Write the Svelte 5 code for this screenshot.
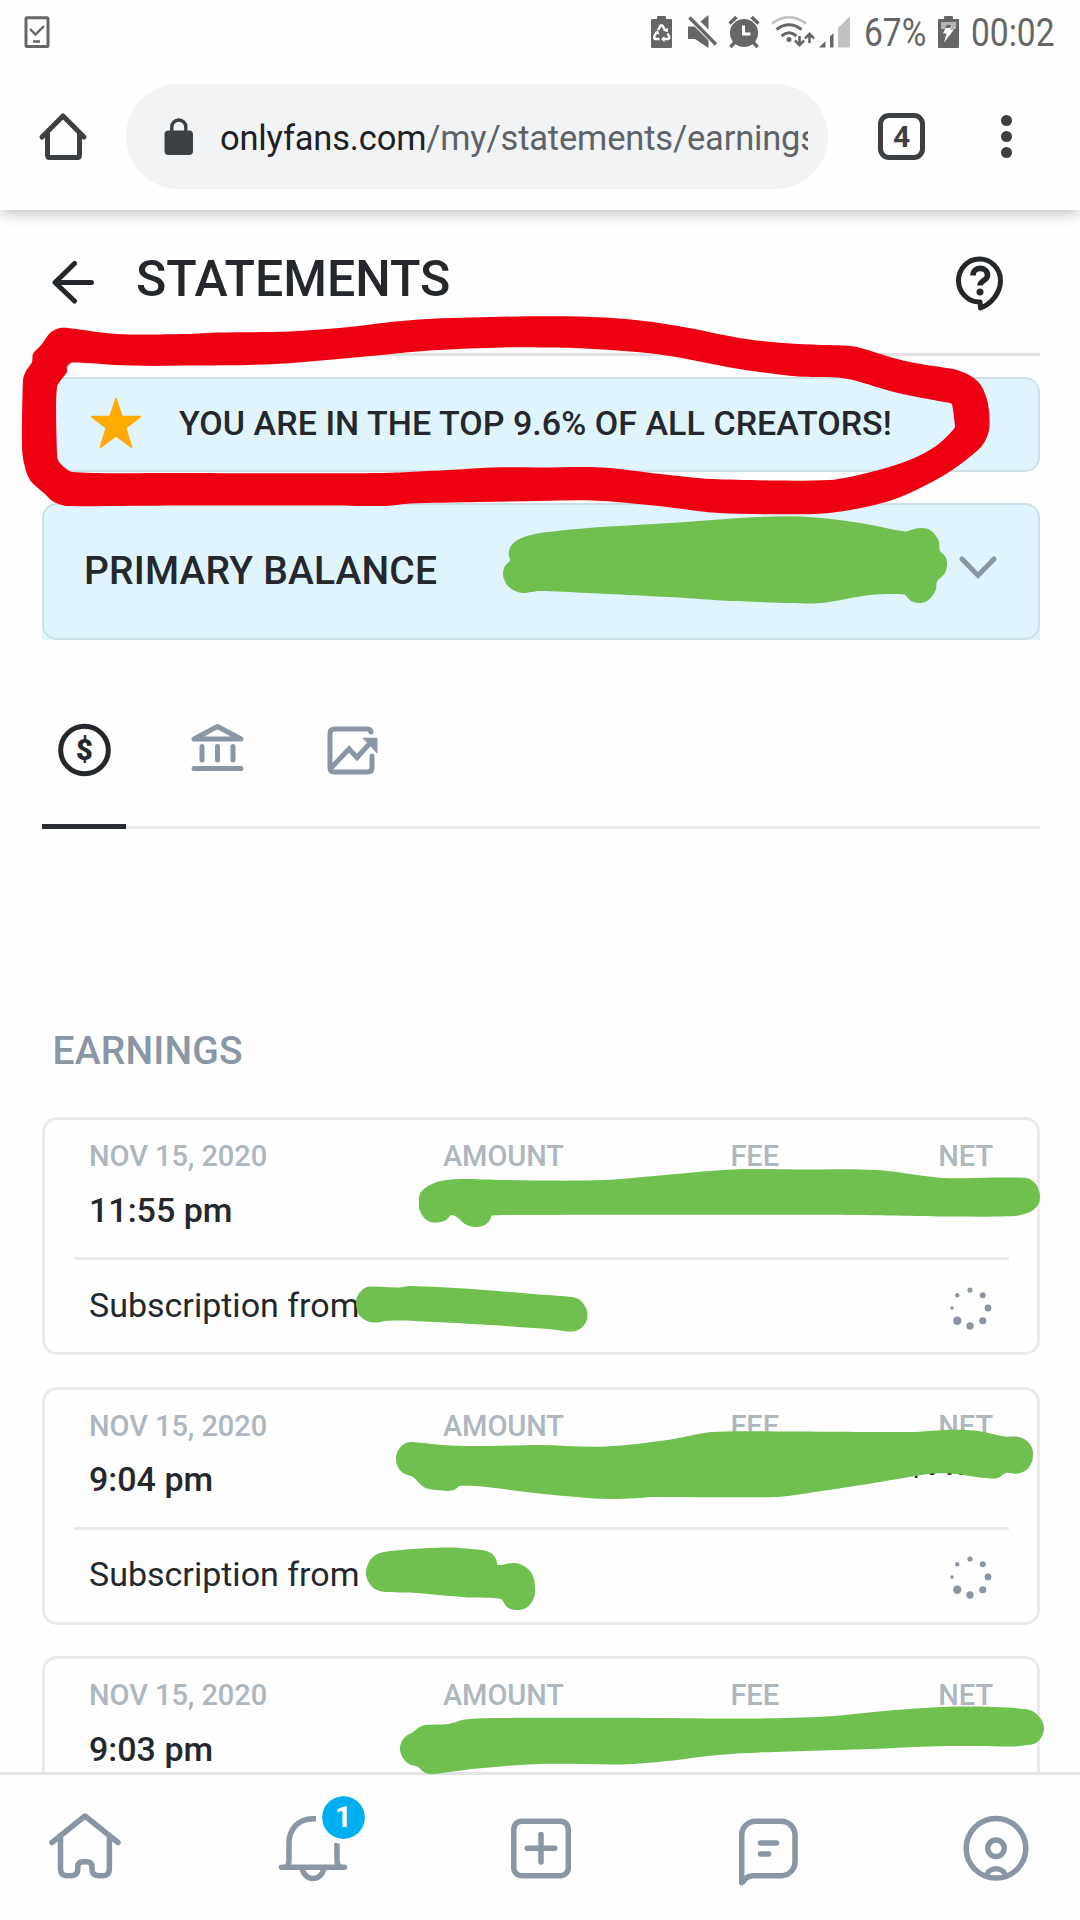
<script>
	const rows = [
		{ date: 'NOV 15, 2020', time: '11:55 pm', net: '' },
		{ date: 'NOV 15, 2020', time: '9:04 pm', net: '$7.99' },
		{ date: 'NOV 15, 2020', time: '9:03 pm', net: '$7.99' }
	];

	// spinner dots, clockwise from the top
	const dots = [2.6, 3, 3.4, 3.6, 3.7, 4.2, 1.8, 2.2].map((r, i) => ({
		r,
		x: 24 + 18 * Math.sin((i * Math.PI) / 4),
		y: 24 - 18 * Math.cos((i * Math.PI) / 4)
	}));

	// closed curve through a list of points
	function smooth(text) {
		const p = text.trim().split(/\s+/).map((s) => s.split(',').map(Number));
		const n = p.length;
		const k = 5.5;
		let d = `M${p[0]}`;
		for (let i = 0; i < n; i++) {
			const a = p[(i + n - 1) % n];
			const b = p[i];
			const c = p[(i + 1) % n];
			const e = p[(i + 2) % n];
			const seg = Math.hypot(c[0] - b[0], c[1] - b[1]);
			const s1 = Math.min(1, seg / Math.hypot(b[0] - a[0], b[1] - a[1]));
			const s2 = Math.min(1, seg / Math.hypot(e[0] - c[0], e[1] - c[1]));
			d += `C${b[0] + ((c[0] - a[0]) * s1) / k},${b[1] + ((c[1] - a[1]) * s1) / k} `;
			d += `${c[0] - ((e[0] - b[0]) * s2) / k},${c[1] - ((e[1] - b[1]) * s2) / k} ${c}`;
		}
		return d + 'Z';
	}

	const ringOuter = `60,328 50,333 42,344 33,354 32,362 26,371 23,380 22,447 24,463 30,480 45,494 54,502 67,506
		179,505.5 327,505.5 386,506 410,503.5 479,502 540,501 592,500.5 654,505.5 719,513 815,514 850,510 895,499
		946,474 981,447 989,430 988,404 982,387 975,379 965,373 953,369 905,361 857,347 843,345.5 798,344 746,339
		678,326 626,319 574,316.5 489,317 413,320 344,327.5 289,331.5 220,332.5 186,334 117,334 72,328.5`;
	const ringInner = `72,362.5 131,365.6 189,365.6 275,364 344,358.6 430,350.5 503,347.5 540,347.5 585,348.5
		660,354.6 733,368 798,376.6 836,377.6 853,380 898,393 950,403 952,404 955,426 954,429 936,446 912,459 877,470.4
		829,480 712,479 660,474 602,467.5 540,467.5 492,467.5 448,470 382,473 172,473 72,472 59,462 57,454 57,387
		67,372 67,367`;

	const scribbles = [
		`509,556 509,551 511,546 516,541 524,537 540,533 588,528 678,522.5 757,517 802,516.5 857,522.5 905,531.5
		914,529 922,528 930,530 936,536 939,542 940,551 945,556 947,563 945,573 937,581.6 936,589 933,595 927,601
		919,603 911,601 904,594.6 870,595 822,603 791,603 722,600.6 678,597.6 588,593 540,591 523,593 515,591
		508,586 504,579 503,573 505,566 510,560.5`,
		`419,1203 419,1198 421,1192 428,1186 441,1181 461,1179 503,1180 540,1180.6 605,1180 654,1176 733,1169.5
		795,1169.5 877,1170 943,1178 994,1177.5 1027,1178 1034,1182 1038,1188 1040,1196 1038,1205 1030,1212
		1015,1216 957,1216.6 850,1215 540,1215 492,1215.6 490,1220 485,1225 475,1227 465,1224 458,1218 451.5,1215
		446,1220 437,1222.6 428,1221 422,1215 419,1208`,
		`356,1303 357,1297 361,1291 367,1287 374,1286.6 399,1287.6 410,1286 472,1289 540,1294.5 572,1297 580,1300
		586,1308 587.5,1315 586,1322 580,1329 571,1331.6 557,1330 540,1328.6 482,1324.6 403,1320.6 386,1321
		375,1322.6 367,1321 360,1316 357,1310`,
		`396,1460 397,1453 401,1446.5 406,1443 412,1442 451,1445.5 489,1446 540,1445 605,1446.5 667,1440
		712,1432 784,1431.5 912,1432 946,1430 974,1430.5 1005,1436.5 1019,1437 1027,1441 1032,1448 1033,1455
		1031,1464 1025,1471 1016,1473.7 1006,1473 998,1478 984,1478 953,1473.7 929,1474 874,1483 815,1492
		777,1497 654,1497 619,1499 588,1498 540,1493.6 482,1486.6 460,1486 454,1490 447,1491 427,1488.6
		420,1484 413,1477 403,1473 398,1467`,
		`366,1572.7 368,1564 374,1556 384,1552 413,1549 448,1547.4 482,1550 491,1553 496,1559 498,1565 513,1563
		522,1565 530,1571 534,1579 535,1592.6 533,1600 526,1608 516,1610 507,1607 501,1599 468,1597.6 410,1592.6
		386,1592 375,1589 368,1581`,
		`400,1750 401,1743 405,1737 413,1732 418,1728 425,1725 448,1724 465,1719.5 499,1718 647,1718 757,1718.5
		826,1716.5 884,1711 943,1707 994,1707 1025,1709 1034,1712 1041,1719 1044,1727 1042,1736 1036,1743
		1027,1745 1015,1746.4 946,1746 884,1748.4 760,1752.4 712,1755.4 671,1760.7 622,1764.4 540,1764
		475,1768.7 434,1774 425,1772.700 418,1767 409,1764 403,1758`
	];
</script>

<div class="screen">
	<div class="status">
		<svg width="26" height="32" viewBox="0 0 26 32" fill="none" stroke="#666" stroke-width="3">
			<rect x="2" y="1.8" width="22" height="28.6" rx="1" />
			<path d="M6 13l5.5 5.500L20 10M9 25.500h7" stroke-width="2.4" />
		</svg>
		<div class="status-right">
			<svg width="204" height="36" viewBox="0 0 204 36" fill="#666">
				<path d="M1 6q0-1 1-1h5V3q0-1 1-1h7q1 0 1 1v2h5q1 0 1 1v27q0 1-1 1H2q-1 0-1-1z" />
				<path d="M8 16l2.500-4.200q1-1.300 2 0L15 16M17.500 19.500l1.700 3q.5 2-1.200 2.500h-4.500M9.500 25H5.500q-2-.5-1.200-2.500L6.500 18" fill="none" stroke="#fff" stroke-width="2.400" />
				<path d="M14.500 22v6l-3.500-3zM12.800 16.500l5-2.800v4.500zM4.500 19.500l3.300-3.500 1.700 4.500z" fill="#fff" />
				<path d="M38 12.500h6l4-1 10.500 10V34L45 25H38zM50.500 7.500l8-6.500v14.500z" />
				<path d="M40 3l26 26" stroke="#fefefe" stroke-width="7" />
				<path d="M39.500 3.500l26.500 27" stroke="#666" stroke-width="3.400" />
				<circle cx="94" cy="19" r="14" />
				<path d="M79.500 9.500l7-6.500M108.500 9.500l-7-6.500M85 28l-4.500 5M103 28l4.500 5" stroke="#666" stroke-width="3.400" />
				<path d="M93.500 11.500v8.500h7" fill="none" stroke="#fff" stroke-width="3" />
				<g fill="none" stroke="#666" stroke-width="3">
					<path d="M122 9.500q17-12.500 34 0" stroke="#c4c4c4" />
					<path d="M126.500 15.500q12.500-9.500 25 0" />
					<path d="M131.500 22q7.500-6.500 15 0" />
				</g>
				<circle cx="139" cy="25.500" r="2.500" />
				<path d="M148.200 22h2.600v6l2.500-2.400 1.600 1.800-5.400 5.600-5.400-5.600 1.600-1.800 2.500 2.400zM158.200 29h2.600v-6l2.500 2.400 1.600-1.800-5.400-5.600-5.400 5.600 1.600 1.800 2.500-2.400z" />
				<path d="M169 33.500l6.500-6.500v6.500zM180 22.500l3.500-3.500v14.500H180z" />
				<path d="M188 14L200 2v31.500h-12z" fill="#c2c2c2" />
			</svg>
			<span class="pct"><b>67%</b></span>
			<svg class="charge" width="22" height="34" viewBox="0 0 22 34">
				<path d="M0 5q0-1 1-1h5V2q0-1 1-1h7q1 0 1 1v2h5q1 0 1 1v27q0 1-1 1H1q-1 0-1-1z" fill="#666" />
				<path d="M3 7h15v7H3z" fill="#b5b5b5" />
				<path d="M9.500 9h5L12 14.500h4L6 27.500l2.500-9H5z" fill="#fff" />
				<path d="M9 9.500h5L12 13H7z" fill="#666" />
			</svg>
			<span class="clock"><b>00:02</b></span>
		</div>
	</div>

	<div class="toolbar">
		<svg class="home" width="50" height="50" viewBox="0 0 50 50" fill="none" stroke="#3c4043" stroke-width="5" stroke-linecap="round" stroke-linejoin="round">
			<path d="M4 25L25 4 46 25M9.500 21.500v21.500q0 2.500 2 2.500h28q2 0 2-2.500V21.500" />
		</svg>
		<div class="omnibox">
			<svg width="30" height="38" viewBox="0 0 30 38">
				<rect x="0.500" y="12.500" width="28.500" height="24.500" rx="4" fill="#3c4043" />
				<path d="M7.800 14V9a7 7 0 0 1 14 0v5" fill="none" stroke="#3c4043" stroke-width="3.400" />
			</svg>
			<div class="url">onlyfans.com<span>/my/statements/earnings</span></div>
		</div>
		<div class="tab-count">4</div>
		<div class="more"><i></i><i></i><i></i></div>
	</div>

	<main>
		<div class="title">
			<svg width="44" height="44" viewBox="0 0 44 44" fill="none" stroke="#24272b" stroke-width="5" stroke-linecap="round" stroke-linejoin="round">
				<path d="M23.500 3.500L4 22.500l19.500 18.500M5 22.500h35.500" />
			</svg>
			<h1>STATEMENTS</h1>
			<svg class="help" width="48" height="57" viewBox="0 0 48 57" fill="none" stroke="#24272b" stroke-width="5" stroke-linejoin="round">
				<path d="M24 47A21 21.500 0 1 1 44.500 25.500C44.500 38 35 49 24.500 53z" />
				<path d="M17 20.500c0-9.500 14.500-9.500 14.500 0 0 5-7.500 5-7.500 10" stroke-width="5.600" />
				<circle cx="24" cy="37" r="3.500" fill="#24272b" stroke="none" />
			</svg>
		</div>

		<div class="banner">
			<svg width="52" height="52" viewBox="0 0 52 52" fill="#ffab00" stroke="#ffab00" stroke-width="1.500" stroke-linejoin="round">
				<path d="M26 1.500l6 18h18.700L35.700 31l6 19.500L26 38.800 10.300 50.500l6-19.500L1.300 19.500H20z" />
			</svg>
			<span>YOU ARE IN THE TOP 9.6% OF ALL CREATORS!</span>
		</div>

		<div class="balance-wrap">
			<div class="balance">
				<span>PRIMARY BALANCE</span>
				<svg width="38" height="24" viewBox="0 0 38 24" fill="none" stroke="#8a96a3" stroke-width="5" stroke-linecap="round">
					<path d="M3 3l16 16.500L35 3" />
				</svg>
			</div>
		</div>

		<div class="tabs">
			<div class="tab active">
				<svg width="54" height="54" viewBox="0 0 54 54">
					<circle cx="27.500" cy="27" r="23.800" fill="none" stroke="#24272b" stroke-width="5" />
					<text x="27.500" y="37" text-anchor="middle">$</text>
				</svg>
			</div>
			<div class="tab">
				<svg width="54" height="54" viewBox="0 0 54 54" fill="none" stroke="#8a96a3" stroke-width="5" stroke-linecap="round" stroke-linejoin="round">
					<path d="M3 16L26.500 3.500 50 16zM11 23.500V37M26.500 23.500V37M42 23.500V37M3 45.500h47" />
				</svg>
			</div>
			<div class="tab">
				<svg width="54" height="54" viewBox="0 0 54 54" fill="none" stroke="#8a96a3" stroke-width="5" stroke-linecap="round">
					<path d="M46 9q-.5-3-4-3H9.500Q5 6 5 10.500v34q0 4.500 4.500 4.500h33q4.500 0 4.500-4.500V33M6 45l18-19 8 8.500L46 19" />
					<path d="M38.500 15.200H52v14.300z" fill="#8a96a3" stroke-width="1" />
				</svg>
			</div>
		</div>

		<h2>EARNINGS</h2>

		{#each rows as row}
			<section class="card">
				<div class="top">
					<div>
						<div class="label">{row.date}</div>
						<div class="time">{row.time}</div>
					</div>
					<div class="col label">AMOUNT</div>
					<div class="col label">FEE</div>
					<div class="col">
						<div class="label">NET</div>
						<div class="value">{row.net}</div>
					</div>
				</div>
				<div class="bottom">
					<span>Subscription from</span>
					<svg width="48" height="48" fill="#8a96a3">
						{#each dots as dot}
							<circle cx={dot.x} cy={dot.y} r={dot.r} />
						{/each}
					</svg>
				</div>
			</section>
		{/each}
	</main>

	<nav>
		<div class="item">
			<svg viewBox="0 0 72 80">
				<path d="M3 34.500L36 8l33 26.500M11.500 30v31q0 6.700 6.700 6.700H22q6.800 0 6.800-6.700v-2q0-5.300 5.300-5.300h3.600q5.300 0 5.300 5.300v2q0 6.700 6.700 6.700h4q6.700 0 6.700-6.700V30" />
			</svg>
		</div>
		<div class="item">
			<svg viewBox="0 0 72 80">
				<path d="M39 10.700h-3C21 10.700 12 22 12 35v17q0 6-4 7.300M60 34.700V52q0 6 4 7.300" stroke-linecap="butt" />
				<path d="M4.500 59.300h63M25.500 60a10.500 10.500 0 0 0 21 0" />
			</svg>
			<span class="badge">1</span>
		</div>
		<div class="item">
			<svg viewBox="0 0 72 80">
				<rect x="8.800" y="13.200" width="54.500" height="54.500" rx="8" />
				<path d="M36 26.500v27.600M22.200 40.300h27.600" />
			</svg>
		</div>
		<div class="item">
			<svg viewBox="0 0 72 80">
				<path d="M9.700 74.500V27.200a14 14 0 0 1 14-14H49a14 14 0 0 1 14 14v26.500a14 14 0 0 1-14 14H21q-6 0-9 5l-2.300 2" />
				<path d="M28.500 35h16M28.500 46h8" />
			</svg>
		</div>
		<div class="item">
			<svg viewBox="0 0 72 80">
				<circle cx="36" cy="40.300" r="29.800" />
				<circle cx="36" cy="40.300" r="8.300" />
				<path d="M26 68a10.500 10.500 0 0 1 20 0" />
			</svg>
		</div>
	</nav>

	<!-- marker strokes over the page -->
	<svg class="ink" viewBox="0 0 1080 1920">
		<path d={smooth(ringOuter) + smooth(ringInner)} fill="#ee0012" fill-rule="evenodd" />
		{#each scribbles as s}
			<path d={smooth(s)} fill="#70c04f" />
		{/each}
	</svg>
</div>

<style>
	:global(body) {
		margin: 0;
		background: #fefefe;
	}

	.screen {
		position: relative;
		display: flex;
		flex-direction: column;
		width: 1080px;
		height: 1920px;
		overflow: hidden;
		font-family: Roboto, 'Liberation Sans', sans-serif;
		color: #24272b;
		background: #fefefe;
	}

	svg {
		display: block;
		flex: none;
	}

	.status {
		position: relative;
		z-index: 1;
		display: flex;
		justify-content: space-between;
		align-items: center;
		box-sizing: border-box;
		height: 66px;
		padding: 0 24px 2px;
		background: #fefefe;
	}

	.status-right {
		display: flex;
		align-items: center;
		color: #666;
		font-size: 39px;
	}

	.status-right b {
		display: inline-block;
		font-weight: 400;
		transform: scaleX(0.86);
		transform-origin: 0 50%;
	}

	.pct {
		width: 63px;
		margin: 2px 11px 0 10px;
		white-space: nowrap;
	}

	.clock {
		width: 85px;
		margin: 2px 0 0 11px;
		white-space: nowrap;
	}

	.toolbar {
		display: flex;
		align-items: center;
		box-sizing: border-box;
		height: 144px;
		padding: 0 0 3px 38px;
		position: relative;
		box-shadow: 0 2px 14px rgba(0, 0, 0, 0.28);
	}

	.home {
		margin-right: 38px;
	}

	.omnibox {
		display: flex;
		align-items: center;
		box-sizing: border-box;
		width: 702px;
		height: 105px;
		padding: 0 20px 0 38px;
		border-radius: 53px;
		background: #f1f3f4;
	}

	.url {
		flex: 1;
		margin: 2px 0 0 26px;
		overflow: hidden;
		white-space: nowrap;
		font-size: 34.5px;
		letter-spacing: -0.18px;
		color: #202124;
	}

	.url span {
		color: #5f6368;
	}

	.tab-count {
		box-sizing: border-box;
		width: 47px;
		height: 47px;
		margin-left: 50px;
		border: 5px solid #3c4043;
		border-radius: 11px;
		font-size: 30px;
		font-weight: 700;
		line-height: 37px;
		text-align: center;
		color: #3c4043;
	}

	.more {
		display: flex;
		flex-direction: column;
		gap: 5px;
		margin-left: 76px;
	}

	.more i {
		width: 11px;
		height: 11px;
		border-radius: 50%;
		background: #3c4043;
	}

	main {
		flex: 1;
		min-height: 0;
		overflow: hidden;
		padding: 0 40px 0 42px;
	}

	.title {
		display: flex;
		align-items: center;
		height: 143px;
		padding: 0 36px 0 9px;
		border-bottom: 3px solid #e1e2e3;
	}

	h1 {
		flex: 1;
		margin: 0 0 5px 41px;
		font-size: 50px;
		font-weight: 500;
	}

	.help {
		margin-top: 4px;
	}

	.banner {
		display: flex;
		align-items: center;
		box-sizing: border-box;
		height: 95px;
		margin-top: 21px;
		padding-left: 46px;
		border: 2px solid #cfe0e8;
		border-radius: 15px;
		background: #e0f4fe;
		font-size: 34px;
		font-weight: 500;
	}

	.banner span {
		margin: 0 0 3px 37px;
		letter-spacing: 0.05px;
	}

	.banner svg {
		margin-bottom: 4px;
	}

	.balance-wrap {
		margin-top: 31px;
		border-radius: 15px 15px 0 0;
		background: #e0f4fe;
	}

	.balance {
		display: flex;
		justify-content: space-between;
		align-items: center;
		box-sizing: border-box;
		height: 137px;
		padding: 0 41px 0 40px;
		border: 2px solid #cfe0e8;
		border-radius: 15px;
		font-size: 39px;
		font-weight: 500;
		letter-spacing: 0.15px;
	}

	.balance span {
		margin-bottom: 1px;
	}

	.balance svg {
		margin-bottom: 8px;
	}

	.tabs {
		display: flex;
		gap: 50px;
		height: 186px;
		border-bottom: 3px solid #e8e9ea;
	}

	.tab {
		box-sizing: border-box;
		width: 84px;
		height: 189px;
		padding: 83px 15px 0;
	}

	.tab.active {
		border-bottom: 5px solid #2b2d35;
	}

	.tab text {
		font-size: 29px;
		font-weight: 900;
		fill: #24272b;
	}

	h2 {
		margin: 199px 0 43px 10.5px;
		font-size: 39px;
		font-weight: 500;
		line-height: 46px;
		letter-spacing: 0.15px;
		color: #8a96a3;
	}

	.card {
		box-sizing: border-box;
		height: 238px;
		margin-bottom: 31.5px;
		padding: 18px 28px 0 29px;
		border: 3px solid #e8eaeb;
		border-radius: 15px;
	}

	.top {
		display: grid;
		grid-template-columns: 1fr 173px 215px 214px;
		box-sizing: border-box;
		height: 119px;
		padding: 0 16px 0 15px;
	}

	.label {
		font-size: 29px;
		font-weight: 500;
		line-height: 36px;
		letter-spacing: -0.05px;
		color: #aeb6be;
	}

	.time {
		margin-top: 15.5px;
		font-size: 34px;
		font-weight: 500;
		line-height: 40px;
	}

	.col {
		text-align: right;
	}

	.value {
		margin-top: 0;
		font-size: 34px;
		font-weight: 500;
		line-height: 38px;
	}

	.bottom {
		display: flex;
		justify-content: space-between;
		align-items: center;
		height: 92px;
		padding: 0 15px;
		border-top: 3px solid #e8eaeb;
		font-size: 34px;
	}

	.bottom span {
		margin-bottom: 3px;
	}

	.bottom svg {
		margin-top: 3px;
	}

	nav {
		display: flex;
		justify-content: space-between;
		box-sizing: border-box;
		height: 148px;
		padding: 33px 48px 0 49px;
		border-top: 3px solid #e2e4e7;
		background: #fefefe;
	}

	.item {
		position: relative;
		width: 72px;
		height: 80px;
	}

	.item svg {
		width: 72px;
		height: 80px;
		fill: none;
		stroke: #8a96a3;
		stroke-width: 5.500;
		stroke-linecap: round;
		stroke-linejoin: round;
	}

	.badge {
		position: absolute;
		top: -17px;
		left: 40px;
		width: 43px;
		height: 43px;
		border: 5px solid #fefefe;
		border-radius: 50%;
		background: #00aff0;
		background-clip: padding-box;
		color: #fff;
		font-size: 30px;
		font-weight: 700;
		line-height: 41px;
		text-align: center;
	}

	.ink {
		position: absolute;
		inset: 0;
		width: 1080px;
		height: 1920px;
	}
</style>
